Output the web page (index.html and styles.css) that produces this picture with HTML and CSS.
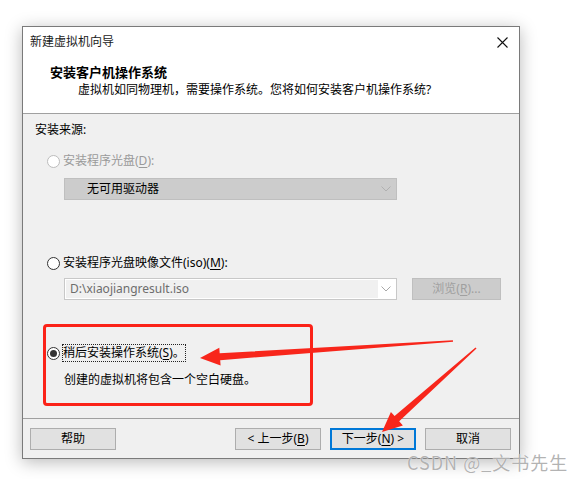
FILE: index.html
```html
<!DOCTYPE html>
<html lang="zh-CN">
<head>
<meta charset="utf-8">
<title>新建虚拟机向导</title>
<link rel="stylesheet" href="styles.css">
</head>
<body>
<div class="stage">
  <div class="window">
    <div class="header">
      <div class="titlebar">
        <span class="title">新建虚拟机向导</span>
        <svg class="close" width="11" height="11" viewBox="0 0 11 11"><path d="M0.5 0.5 L10.5 10.5 M10.5 0.5 L0.5 10.5" stroke="#111" stroke-width="1.1" fill="none"/></svg>
      </div>
      <div class="heading">安装客户机操作系统</div>
      <div class="subtitle">虚拟机如同物理机，需要操作系统。您将如何安装客户机操作系统?</div>
    </div>
    <div class="content">
      <div class="label">安装来源:</div>
      <div class="radio-row row-disc disabled"><span class="radio"></span><span class="rtext">安装程序光盘(<u>D</u>):</span></div>
      <div class="combo combo-disabled">
        <span class="combo-text">无可用驱动器</span>
        <svg class="chev" width="10" height="6" viewBox="0 0 10 6"><path d="M0.5 0.5 L5 5 L9.5 0.5" stroke="#b0b0b0" fill="none"/></svg>
      </div>
      <div class="radio-row row-iso"><span class="radio"></span><span class="rtext">安装程序光盘映像文件(iso)(<u>M</u>):</span></div>
      <div class="iso-row">
        <div class="combo combo-iso">
          <span class="combo-input">D:\xiaojiangresult.iso</span>
          <svg class="chev" width="10" height="6" viewBox="0 0 10 6"><path d="M0.5 0.5 L5 5 L9.5 0.5" stroke="#a8a8a8" fill="none"/></svg>
        </div>
        <div class="browse">浏览(<u>R</u>)...</div>
      </div>
      <div class="radio-row row-later"><span class="radio checked"></span><span class="rtext focus">稍后安装操作系统(<u>S</u>)。</span></div>
      <div class="desc">创建的虚拟机将包含一个空白硬盘。</div>
    </div>
    <div class="footer">
      <div class="btn">帮助</div>
      <div class="btn-group">
        <div class="btn">&lt; 上一步(<u>B</u>)</div>
        <div class="btn btn-default">下一步(<u>N</u>) &gt;</div>
        <div class="btn">取消</div>
      </div>
    </div>
  </div>
  <div class="annot-box"></div>
  <svg class="arrows" width="579" height="479" viewBox="0 0 579 479">
    <polygon fill="#f8261b" points="200,358 219.3,347.7 219.7,353.2 452.9,340.2 453.1,341.8 220.2,360.2 220.6,365.6"/>
    <polygon fill="#f8261b" points="382,432 390.9,412 394.6,416.1 475.5,347.4 476.5,348.6 399.2,421.3 402.9,425.4"/>
  </svg>
  <div class="watermark">CSDN @_文书先生</div>
</div>
</body>
</html>
```
FILE: styles.css
```css
* { box-sizing: border-box; }
html, body { margin: 0; padding: 0; background: #fff; }
body {
  font-family: "Noto Sans", "Noto Sans CJK SC", sans-serif;
  font-size: 12px;
  color: #000;
}
u { text-decoration: underline; text-underline-offset: 2px; }

.stage {
  position: relative;
  width: 579px;
  height: 479px;
  padding: 26px 0 0 22px;
  overflow: hidden;
}

.window {
  width: 498px;
  height: 433px;
  border: 1px solid #7a7a7a;
  background: #fff;
  display: flex;
  flex-direction: column;
  box-shadow: 0 3px 16px rgba(0, 0, 0, 0.28);
}

.header {
  height: 87px;
  border-bottom: 1px solid #a0a0a0;
  background: #fff;
}
.titlebar {
  display: flex;
  justify-content: space-between;
  align-items: center;
  height: 16px;
  margin-top: 7px;
  padding: 0 11px 0 7px;
  line-height: 16px;
}
.title { color: #1a1a1a; }
.close { display: block; }
.heading {
  margin-top: 14px;
  padding-left: 27px;
  font-weight: bold;
  font-size: 13px;
  line-height: 16px;
}
.subtitle {
  margin-top: 2px;
  padding-left: 55px;
  line-height: 16px;
}

.content {
  height: 304px;
  background: #f0f0f0;
  padding-top: 8px;
  line-height: 16px;
}
.label { margin-left: 12px; }

.radio-row {
  display: flex;
  align-items: center;
  height: 16px;
  margin-left: 24px;
}
.radio {
  width: 13px;
  height: 13px;
  border: 1px solid #333;
  border-radius: 50%;
  background: #fff;
  margin-right: 3px;
  flex: none;
  display: flex;
  align-items: center;
  justify-content: center;
}
.radio.checked::after {
  content: "";
  width: 7px;
  height: 7px;
  border-radius: 50%;
  background: #333;
}
.disabled .radio { border-color: #bcbcbc; }
.disabled .rtext { color: #9a9a9a; }
.row-disc { margin-top: 15px; }
.row-iso { margin-top: 55px; }
.row-later { margin-top: 45px; }
.focus { outline: 1px dotted #222; outline-offset: 0; }

.combo {
  display: flex;
  align-items: center;
  justify-content: space-between;
  height: 22px;
  width: 333px;
  margin-left: 41px;
}
.combo-disabled {
  margin-top: 9px;
  background: #cccccc;
  border: 1px solid #bfbfbf;
  padding: 0 5px 0 22px;
}
.combo-text { color: #000; }

.iso-row {
  display: flex;
  align-items: center;
  margin-top: 7px;
  height: 22px;
}
.combo-iso {
  background: #fff;
  border: 1px solid #c8c8c8;
  padding: 1px 5px 1px 1px;
}
.combo-input {
  flex: none;
  width: 312px;
  height: 18px;
  line-height: 18px;
  background: #f0f0f0;
  color: #6d6d6d;
  padding-left: 4px;
}
.browse {
  width: 89px;
  height: 22px;
  margin-left: 15px;
  background: #cccccc;
  border: 1px solid #bfbfbf;
  color: #a0a0a0;
  display: flex;
  align-items: center;
  justify-content: center;
}

.desc { margin-top: 11px; margin-left: 41px; }

.footer {
  flex: 1;
  border-top: 1px solid #a0a0a0;
  background: #f0f0f0;
  display: flex;
  justify-content: space-between;
  align-items: flex-start;
  padding: 9px 8px 0 7px;
}
.btn-group { display: flex; gap: 9px; }
.btn {
  width: 86px;
  height: 22px;
  background: #e1e1e1;
  border: 1px solid #adadad;
  display: flex;
  align-items: center;
  justify-content: center;
  line-height: 16px;
}
.btn-default { border: 2px solid #0078d7; }

.annot-box {
  position: absolute;
  left: 43px;
  top: 324px;
  width: 270px;
  height: 82px;
  border: 3px solid #fb2218;
  border-radius: 4px;
}
.arrows { position: absolute; left: 0; top: 0; }

.watermark {
  position: absolute;
  left: 407px;
  top: 450px;
  font-family: "Noto Sans CJK SC", sans-serif;
  font-size: 18px;
  line-height: 24px;
  color: rgba(165, 165, 165, 0.85);
  letter-spacing: 1px;
  text-shadow: 0 0 1px #fff;
  white-space: nowrap;
}
```
